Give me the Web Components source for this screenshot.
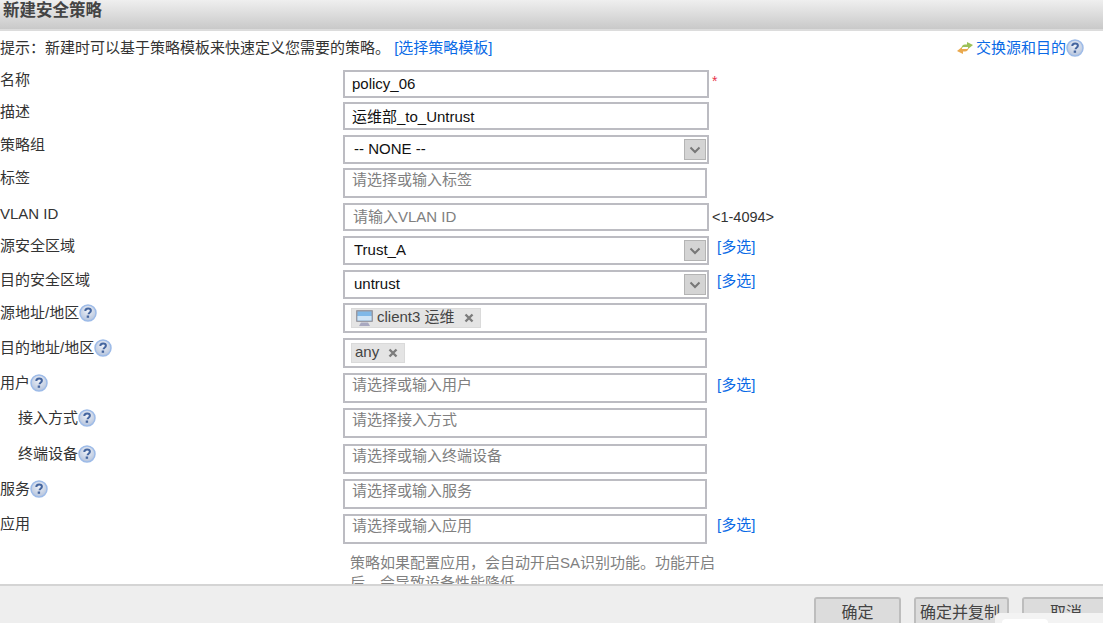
<!DOCTYPE html>
<html lang="zh">
<head>
<meta charset="utf-8">
<title>新建安全策略</title>
<style>
  html, body { margin: 0; height: 100%; overflow: hidden; background: #fff; }
  body { font: 15px "Liberation Sans", "Noto Sans CJK SC", sans-serif; color: #333; }
</style>
</head>
<body>
<template id="help-tpl">
  <style>
    :host { display: inline-block; width: 18px; height: 18px; vertical-align: -4px; }
    svg { display: block; }
  </style>
  <svg width="18" height="18" viewBox="0 0 18 18">
    <defs>
      <radialGradient id="g" cx="50%" cy="35%" r="65%">
        <stop offset="0" stop-color="#eef1f7"/>
        <stop offset="1" stop-color="#b4c3dc"/>
      </radialGradient>
    </defs>
    <circle cx="9" cy="9" r="8" fill="url(#g)" stroke="#9dbbe8" stroke-width="1.500"/>
    <path d="M6.300 7.100c0-1.700 1.200-2.700 2.800-2.700 1.600 0 2.800.9 2.800 2.300 0 1.100-.7 1.600-1.400 2.100-.6.400-.9.700-.9 1.400" fill="none" stroke="#44659f" stroke-width="2"/>
    <rect x="7.700" y="11.500" width="2.400" height="2.300" fill="#44659f"/>
  </svg>
</template>

<template id="row-tpl">
  <style>
    :host { display: grid; grid-template-columns: 343px 1fr; height: var(--h, 35px); }
    .lab { line-height: 20px; margin-top: var(--lab-top, 0); white-space: nowrap; }
    :host([indent]) .lab { padding-left: 18px; }
    .ctl { display: flex; align-items: flex-start; }
    ::slotted([slot=after]) { margin-left: 3px; line-height: 20px; }
  </style>
  <div class="lab"><span id="t"></span><help-icon id="h"></help-icon></div>
  <div class="ctl"><slot></slot><slot name="after"></slot></div>
</template>

<template id="box-tpl">
  <style>
    :host { display: flex; box-sizing: border-box; width: var(--w, 364px); height: var(--bh, 30px); border: 2px solid #bcbcc2; background: #fff; align-items: center; padding: 0 7px; }
    :host([hint]) { align-items: flex-start; color: #808080; line-height: 20px; }
    :host([strong]) { color: #111; padding-left: 7px; padding-bottom: 1px; }
    ::slotted(*) { flex: none; }
  </style>
  <slot></slot>
</template>

<template id="select-tpl">
  <style>
    :host { display: flex; box-sizing: border-box; width: 366px; height: 29px; border: 2px solid #bcbcc2; background: #fff; align-items: center; justify-content: space-between; padding: 0 1px 0 9px; color: #111; }
    .text { position: relative; top: -1px; }
    .arrow { box-sizing: border-box; width: 22px; height: 21px; background: #d4d4d4; border: 1px solid #b4b4b4; display: flex; align-items: center; justify-content: center; }
    svg { display: block; }
  </style>
  <span class="text"><slot></slot></span>
  <span class="arrow"><svg width="12" height="8" viewBox="0 0 12 8"><path d="M1.500 1.500 6 6l4.500-4.500" fill="none" stroke="#777" stroke-width="2"/></svg></span>
</template>

<template id="tag-tpl">
  <style>
    :host { display: inline-flex; align-items: center; height: 20px; box-sizing: border-box; background: #e4e4e4; border: 1px solid #dadada; color: #444; padding: 0 3px 2px 3px; margin-left: -1px; line-height: 18px; }
    .x { margin: 2px 3px 0 9px; display: block; }
    ::slotted(svg) { margin: 2px 3px 0 0; }
  </style>
  <slot name="icon"></slot><slot></slot>
  <svg class="x" width="10" height="10" viewBox="0 0 10 10"><path d="M1.500 1.500l7 7M8.500 1.500l-7 7" stroke="#7c7c7c" stroke-width="2.400" fill="none"/></svg>
</template>

<template id="btn-tpl">
  <style>
    :host { display: block; flex: none; box-sizing: border-box; height: 34px; border: 2px solid #bdbdbd; border-bottom: 0; border-radius: 3px 3px 0 0; background: #dcdcdc; color: #444; font-size: 16px; text-align: center; line-height: 27px; white-space: nowrap; }
  </style>
  <slot></slot>
</template>

<template id="dialog-tpl">
  <style>
    :host { display: flex; flex-direction: column; height: 623px; position: relative; overflow: hidden; }
    header { flex: none; box-sizing: border-box; height: 31px; padding-left: 3px; background: linear-gradient(#efefef, #c9c9c9); border-bottom: 2px solid #dcdcdc; color: #444; font-size: 16.500px; font-weight: bold; line-height: 21px; }
    .tip { flex: none; display: flex; justify-content: space-between; height: 39px; padding: 7px 19px 0 0; box-sizing: border-box; line-height: 20px; }
    main { flex: 1; overflow: hidden; min-height: 0; }
    footer { flex: none; box-sizing: border-box; height: 39px; background: #eee; border-top: 2px solid #d4d4d4; display: flex; gap: 13px; padding: 11px 0 0 814px; }
    .overlay { position: absolute; left: 995px; top: 613px; right: 0; bottom: 0; background: #f3f3f3; border-radius: 5px 0 0 0; }
    .overlay i { position: absolute; left: 7px; top: 6px; width: 46px; bottom: 0; background: #fff; border-radius: 4px 4px 0 0; }
  </style>
  <header><slot name="title"></slot></header>
  <div class="tip"><span><slot name="tip"></slot></span><span><slot name="swap"></slot></span></div>
  <main><slot></slot></main>
  <footer><slot name="actions"></slot></footer>
  <div class="overlay"><i></i></div>
</template>

<policy-dialog>
  <span slot="title">新建安全策略</span>
  <span slot="tip">提示：新建时可以基于策略模板来快速定义您需要的策略。 <a style="color:#0a6ae6">[选择策略模板]</a></span>
  <span slot="swap" style="color:#0a6ae6;margin-right:1px"><svg width="18" height="14" viewBox="0 0 18 14" style="vertical-align:-2px;margin-right:2px"><path d="M11 1l6 3-5 4V6H8C7 6 6 6.500 5.500 7.500 5.500 5 7 3.500 9 3.500h2z" fill="#9cc158"/><path d="M7 13L1 10l5-4v2h4c1 0 2-.5 2.500-1.500C12.500 9 11 10.500 9 10.500H7z" fill="#eaa94e"/></svg>交换源和目的<help-icon style="margin-right:-1px"></help-icon></span>

  <policy-row label="名称" style="--h:32px">
    <plain-box strong style="--w:366px;--bh:28px">policy_06</plain-box>
    <span slot="after" style="color:#e8334a;font-size:14px;line-height:16px;margin-top:3px">*</span>
  </policy-row>
  <policy-row label="描述" style="--h:33px">
    <plain-box strong style="--w:366px;--bh:28px">运维部_to_Untrust</plain-box>
  </policy-row>
  <policy-row label="策略组" style="--h:33px"><drop-select>-- NONE --</drop-select></policy-row>
  <policy-row label="标签" style="--h:35px"><plain-box hint>请选择或输入标签</plain-box></policy-row>
  <policy-row label="VLAN ID" style="--h:33px;--lab-top:1px">
    <plain-box hint style="--w:366px;--bh:28px;padding:0 0 0 8px;align-items:center">请输入VLAN ID</plain-box>
    <span slot="after" style="margin-top:4px;color:#333;font-size:14.500px">&lt;1-4094&gt;</span>
  </policy-row>
  <policy-row label="源安全区域" style="--h:34px">
    <drop-select>Trust_A</drop-select>
    <a slot="after" style="color:#0a6ae6;margin:1px 0 0 8px">[多选]</a>
  </policy-row>
  <policy-row label="目的安全区域" style="--h:33px">
    <drop-select>untrust</drop-select>
    <a slot="after" style="color:#0a6ae6;margin:1px 0 0 8px">[多选]</a>
  </policy-row>
  <policy-row label="源地址/地区" help style="--h:35px">
    <plain-box><tag-chip><svg slot="icon" width="19" height="18" viewBox="0 0 19 18"><rect x="1" y="1" width="17" height="12" rx="1" fill="#9a9aa2"/><rect x="2.500" y="2.500" width="14" height="9" fill="#7fb8e8"/><path d="M2.500 7h14v4.500h-14z" fill="#cfe4f6"/><path d="M6 13.500h7L15 17H4z" fill="#a8a8c0"/></svg>client3 运维</tag-chip></plain-box>
  </policy-row>
  <policy-row label="目的地址/地区" help style="--h:35px"><plain-box><tag-chip>any</tag-chip></plain-box></policy-row>
  <policy-row label="用户" help style="--h:35px">
    <plain-box hint>请选择或输入用户</plain-box>
    <a slot="after" style="color:#0a6ae6;margin:2px 0 0 10px">[多选]</a>
  </policy-row>
  <policy-row label="接入方式" help indent style="--h:36px"><plain-box hint>请选择接入方式</plain-box></policy-row>
  <policy-row label="终端设备" help indent style="--h:35px"><plain-box hint>请选择或输入终端设备</plain-box></policy-row>
  <policy-row label="服务" help style="--h:35px"><plain-box hint>请选择或输入服务</plain-box></policy-row>
  <policy-row label="应用" style="--h:39px">
    <plain-box hint>请选择或输入应用</plain-box>
    <a slot="after" style="color:#0a6ae6;margin:1px 0 0 10px">[多选]</a>
  </policy-row>
  <div style="margin-left:350px;width:370px;color:#808080;line-height:20px">策略如果配置应用，会自动开启SA识别功能。功能开启后，会导致设备性能降低。</div>

  <action-btn slot="actions" style="width:87px">确定</action-btn>
  <action-btn slot="actions" style="width:95px;padding-right:3px">确定并复制</action-btn>
  <action-btn slot="actions" style="width:88px">取消</action-btn>
</policy-dialog>

<script>
  // all elements just stamp their template into an open shadow root
  function simple(tag, tplId) {
    customElements.define(tag, class extends HTMLElement {
      constructor() {
        super();
        this.attachShadow({ mode: "open" }).appendChild(document.getElementById(tplId).content.cloneNode(true));
      }
    });
  }
  simple("help-icon", "help-tpl");
  simple("plain-box", "box-tpl");
  simple("drop-select", "select-tpl");
  simple("tag-chip", "tag-tpl");
  simple("action-btn", "btn-tpl");
  simple("policy-dialog", "dialog-tpl");

  class PolicyRow extends HTMLElement {
    constructor() {
      super();
      this.attachShadow({ mode: "open" }).appendChild(document.getElementById("row-tpl").content.cloneNode(true));
    }
    connectedCallback() {
      this.shadowRoot.getElementById("t").textContent = this.getAttribute("label");
      if (!this.hasAttribute("help")) this.shadowRoot.getElementById("h").remove();
    }
  }
  customElements.define("policy-row", PolicyRow);
</script>
</body>
</html>
